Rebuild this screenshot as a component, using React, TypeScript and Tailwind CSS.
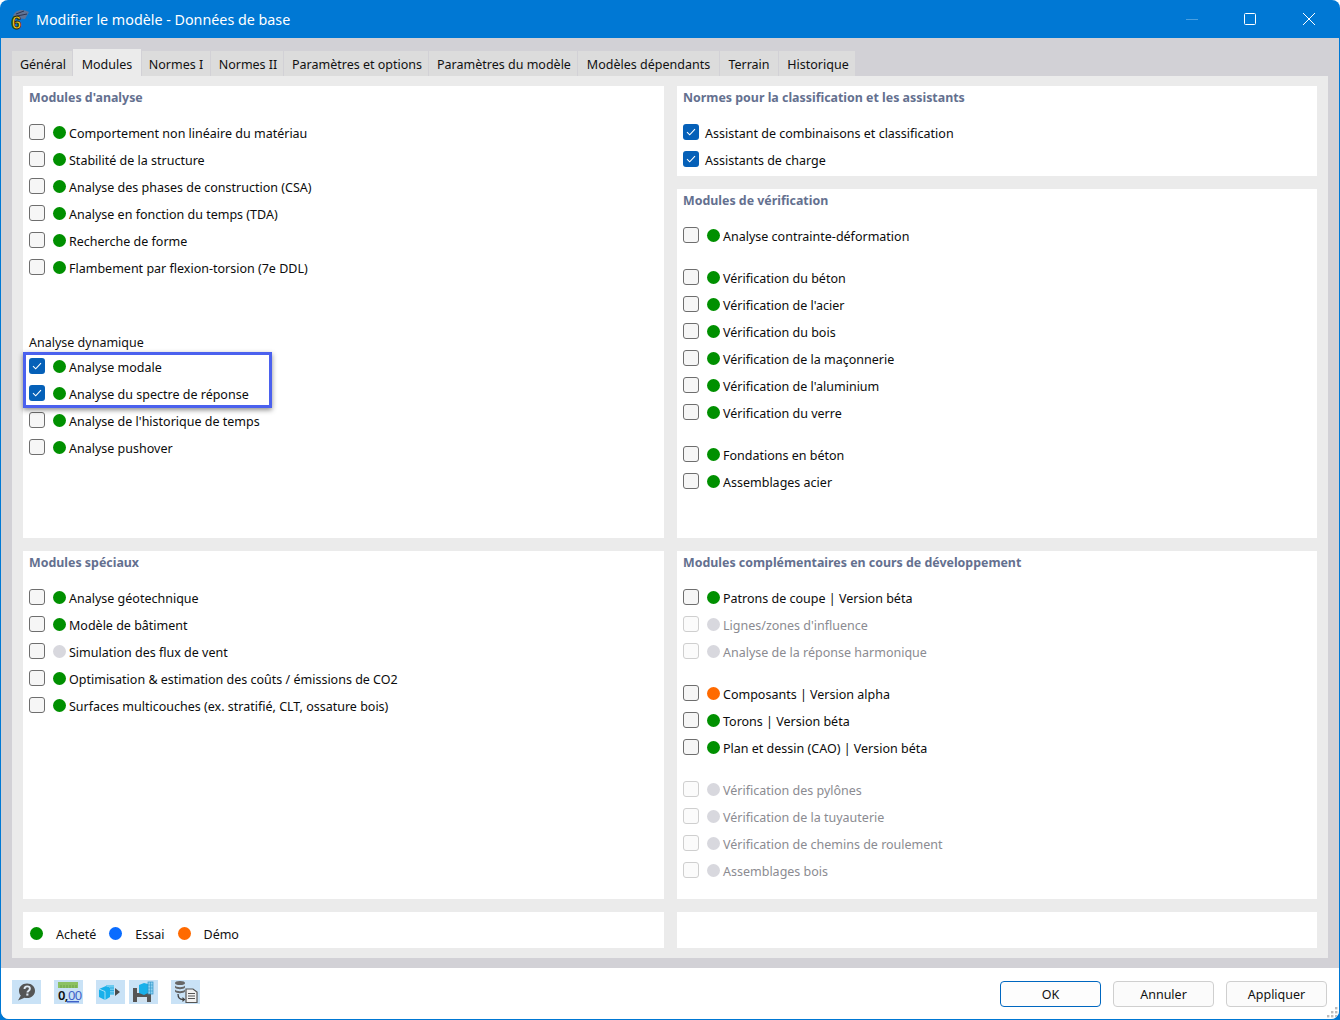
import React from "react";

type RowP = { t: string; c?: "g" | "o" | "n" | "d" | "x"; on?: boolean; mt?: boolean; dis?: boolean };

const Row = ({ t, c = "g", on, mt, dis }: RowP) => (
  <div className={`flex items-center h-[27px] pl-[6px] ${mt ? "mt-[15px]" : ""}`}>
    {on ? (
      <span className="w-4 h-4 rounded-[3px] bg-[#0560b8] flex items-center justify-center shrink-0 -mt-px">
        <svg width="10" height="8" viewBox="0 0 10 8" fill="none"><path d="M1 4.2 L3.7 6.8 L9 1.2" stroke="#fff" strokeWidth="1.1" /></svg>
      </span>
    ) : (
      <span className={`w-4 h-4 rounded-[3px] border shrink-0 -mt-px ${dis ? "border-[#cfcfcf] bg-[#fbfbfb]" : "border-[#6e6e6e] bg-[#f6f6f6]"}`} />
    )}
    {c !== "x" && (
      <span className={`w-[13px] h-[13px] rounded-full ml-2 shrink-0 -mt-px ${c === "g" ? "bg-[#009000]" : c === "o" ? "bg-[#ff6a00]" : "bg-[#d8d8de]"}`} />
    )}
    <span className={`pt-[4px] whitespace-nowrap ${c === "x" ? "ml-[6px]" : "ml-[3px]"} ${dis ? "text-[#8b8b91]" : "text-[#0c0c0c]"}`}>{t}</span>
  </div>
);

const Title = ({ t }: { t: string }) => (
  <div className="h-[22px] pl-[6px] pt-[2px] flex items-center font-bold text-[12.4px] text-[#64708f] mb-[11px]">{t}</div>
);

const tabs: [string, string][] = [
  ["Général", "w-[61px] pl-[2px]"],
  ["Modules", "w-[69px]"],
  ["Normes I", "w-[69px]"],
  ["Normes II", "w-[73px] pl-[2px]"],
  ["Paramètres et options", "w-[145px] pl-[2px]"],
  ["Paramètres du modèle", "w-[149px] pl-[2px]"],
  ["Modèles dépendants", "w-[142px]"],
  ["Terrain", "w-[59px]"],
  ["Historique", "w-[77px] pl-[2px]"],
];

const IconBox = ({ children, cls }: { children: React.ReactNode; cls?: string }) => (
  <div className={`w-[29px] h-[24px] bg-[#c9e2f6] flex items-center justify-center ${cls ?? ""}`}>{children}</div>
);

export default function App() {
  return (
    <div className="w-[1340px] h-[1020px] bg-[#0078d4] rounded-t-[8px] overflow-hidden text-[12.5px] leading-none flex flex-col relative" style={{ fontFamily: '"Noto Sans", sans-serif' }}>
      {/* Title bar */}
      <div className="h-[38px] flex items-center shrink-0 text-white relative">
        <svg className="ml-[9px] overflow-visible" width="20" height="22" viewBox="0 0 20 22">
          <path d="M4 8 C6 2 13 0 20 4 L16 11 L7 10 Z" fill="#5f7396" />
          <path d="M7 6 L15 3 M8 8 L18 6" stroke="#2c3550" strokeWidth="1" />
          <text x="2.5" y="21" fontSize="18" fontWeight="700" fill="#f4cc22" stroke="#2a2608" strokeWidth="0.9" fontFamily="Liberation Sans, sans-serif">6</text>
        </svg>
        <span className="ml-[7px] pt-[2px] text-[14.3px]">Modifier le modèle - Données de base</span>
        <div className="ml-auto flex items-center">
          <span className="w-3 h-px bg-[#4a9fe0] mr-[46px]" />
          <span className="w-3 h-3 border border-white rounded-[1.5px] mr-[47px]" />
          <svg className="mr-[25px]" width="12" height="12" viewBox="0 0 12 12"><path d="M0 0 L12 12 M12 0 L0 12" stroke="#fff" strokeWidth="1" /></svg>
        </div>
      </div>

      {/* Body */}
      <div className="flex-1 ml-px mr-px mb-px bg-[#d2d1d6] flex flex-col rounded-b-[8px] overflow-hidden">
        <div className="flex-1 flex flex-col px-[11px] pt-[13px] pb-[10px]">
          <div className="flex h-[25px] items-end shrink-0">
            {tabs.map(([t, w], i) => (
              <div key={t} className={`${w} flex items-center justify-center border-r border-[#d2d1d6] text-[#111] ${i === 1 ? "h-[27px] bg-[#ebebeb] pt-[5px]" : "h-[25px] bg-[#dcdcdc] pt-[3px]"}`}>{t}</div>
            ))}
          </div>
          <div className="flex-1 bg-[#ebebeb] px-[11px] py-[10px] flex flex-col gap-[13px]">
            <div className="flex gap-[13px] h-[452px]">
              <div className="w-[641px] bg-white relative">
                <Title t="Modules d'analyse" />
                <Row t="Comportement non linéaire du matériau" />
                <Row t="Stabilité de la structure" />
                <Row t="Analyse des phases de construction (CSA)" />
                <Row t="Analyse en fonction du temps (TDA)" />
                <Row t="Recherche de forme" />
                <Row t="Flambement par flexion-torsion (7e DDL)" />
                <div className="h-[25px] mt-[47px] pl-[6px] pt-[6px] flex items-center text-[#111]">Analyse dynamique</div>
                <Row t="Analyse modale" on />
                <Row t="Analyse du spectre de réponse" on />
                <Row t="Analyse de l'historique de temps" />
                <Row t="Analyse pushover" />
                <div className="absolute left-0 top-[266px] w-[249px] h-[56px] border-[3px] border-[#4b61ee] shadow-[0_2px_5px_rgba(0,0,0,0.45)]" />
              </div>
              <div className="w-[640px] flex flex-col gap-[13px]">
                <div className="h-[90px] bg-white">
                  <Title t="Normes pour la classification et les assistants" />
                  <Row t="Assistant de combinaisons et classification" on c="x" />
                  <Row t="Assistants de charge" on c="x" />
                </div>
                <div className="flex-1 bg-white">
                  <Title t="Modules de vérification" />
                  <Row t="Analyse contrainte-déformation" />
                  <Row t="Vérification du béton" mt />
                  <Row t="Vérification de l'acier" />
                  <Row t="Vérification du bois" />
                  <Row t="Vérification de la maçonnerie" />
                  <Row t="Vérification de l'aluminium" />
                  <Row t="Vérification du verre" />
                  <Row t="Fondations en béton" mt />
                  <Row t="Assemblages acier" />
                </div>
              </div>
            </div>
            <div className="flex gap-[13px] h-[348px]">
              <div className="w-[641px] bg-white">
                <Title t="Modules spéciaux" />
                <Row t="Analyse géotechnique" />
                <Row t="Modèle de bâtiment" />
                <Row t="Simulation des flux de vent" c="n" />
                <Row t="Optimisation & estimation des coûts / émissions de CO2" />
                <Row t="Surfaces multicouches (ex. stratifié, CLT, ossature bois)" />
              </div>
              <div className="w-[640px] bg-white">
                <Title t="Modules complémentaires en cours de développement" />
                <Row t="Patrons de coupe | Version béta" />
                <Row t="Lignes/zones d'influence" c="d" dis />
                <Row t="Analyse de la réponse harmonique" c="d" dis />
                <Row t="Composants | Version alpha" c="o" mt />
                <Row t="Torons | Version béta" />
                <Row t="Plan et dessin (CAO) | Version béta" />
                <Row t="Vérification des pylônes" c="d" dis mt />
                <Row t="Vérification de la tuyauterie" c="d" dis />
                <Row t="Vérification de chemins de roulement" c="d" dis />
                <Row t="Assemblages bois" c="d" dis />
              </div>
            </div>
            <div className="flex gap-[13px] h-[36px]">
              <div className="w-[641px] bg-white flex items-center pl-[7px] text-[#111]">
                <span className="w-[13px] h-[13px] rounded-full bg-[#009000] mt-[6px]" />
                <span className="ml-[13px] mt-[11px]">Acheté</span>
                <span className="w-[13px] h-[13px] rounded-full bg-[#0a6cff] ml-[13px] mt-[6px]" />
                <span className="ml-[13px] mt-[11px]">Essai</span>
                <span className="w-[13px] h-[13px] rounded-full bg-[#ff6a00] ml-[13px] mt-[6px]" />
                <span className="ml-[13px] mt-[11px]">Démo</span>
              </div>
              <div className="w-[640px] bg-white" />
            </div>
          </div>
        </div>

        {/* Footer */}
        <div className="h-[51px] bg-white flex items-start pt-[12px] pl-[11px] pr-[12px] shrink-0 relative">
          <IconBox>
            <svg width="19" height="18" viewBox="0 0 19 18">
              <path d="M10 0.5 C5 0.5 2 3.8 2 7.7 C2 9.8 2.8 11.4 3.8 12.5 L1 17.5 L7.5 14.7 C8.3 14.9 9.1 15 10 15 C15 15 18 11.6 18 7.7 C18 3.8 15 0.5 10 0.5 Z" fill="#555" />
              <path d="M7.5 6 C7.5 4.4 8.6 3.4 10.2 3.4 C11.8 3.4 12.9 4.4 12.9 5.7 C12.9 7.6 10.4 7.7 10.4 9.6" fill="none" stroke="#dfe9f2" strokeWidth="1.9" />
              <rect x="9.3" y="10.5" width="2.1" height="2.1" fill="#dfe9f2" />
            </svg>
          </IconBox>
          <IconBox cls="ml-[13px] relative">
            <svg width="29" height="24" viewBox="0 0 29 24">
              <rect x="4" y="2" width="20" height="6" fill="#8cc163" />
              <path d="M7 5v3M10 5v3M13 5v3M16 5v3M19 5v3M22 5v3" stroke="#5f9a3d" strokeWidth="0.7" />
              <rect x="13" y="21" width="12" height="1.5" fill="#3f62c9" />
            </svg>
            <span className="absolute left-[4px] top-[9px] text-[13px] font-semibold tracking-[-0.6px] text-[#111]">0,<span className="text-[#3f62c9] font-normal">00</span></span>
          </IconBox>
          <IconBox cls="ml-[13px]">
            <svg width="29" height="24" viewBox="0 0 29 24">
              <path d="M3 9 L10 6 L14 7.5 L14 17 L9 20 L3 17 Z" fill="#19b0ea" />
              <path d="M10 5 L18 5 L18 15 L14 15 L14 7.5 L10 6 Z" fill="#6ccbf0" />
              <path d="M14 8H18M14 10.5H18M14 13H18" stroke="#19a0dc" strokeWidth="0.7" />
              <path d="M3 9 L9 11.5 L9 20" fill="none" stroke="#c8eefb" strokeWidth="0.8" />
              <path d="M19 8 L24 12 L19 16 Z" fill="#4b4b4b" />
            </svg>
          </IconBox>
          <IconBox cls="ml-[4px]">
            <svg width="29" height="24" viewBox="0 0 29 24">
              <path d="M4 8 H18 L22 11 V22 H4 Z" fill="#555" />
              <rect x="8" y="8" width="8" height="5" fill="#cfe0ee" />
              <rect x="8" y="17" width="10" height="5" fill="#cfe0ee" />
              <path d="M10 5 L15 3 L19 4 L19 13 L15 15 L10 13 Z" fill="#19b0ea" />
              <rect x="19" y="2" width="5" height="12" fill="#8fd3f1" stroke="#2f93c9" strokeWidth="0.7" />
              <path d="M19 5H24M19 8H24M19 11H24M21.5 2V14" stroke="#2f93c9" strokeWidth="0.6" />
            </svg>
          </IconBox>
          <IconBox cls="ml-[13px]">
            <svg width="29" height="24" viewBox="0 0 29 24">
              <ellipse cx="9" cy="3" rx="5" ry="2" fill="#666" />
              <path d="M4 5.5 C5 7.7 13 7.7 14 5.5 V7.5 C13 9.7 5 9.7 4 7.5 Z" fill="#666" />
              <path d="M4 9.5 C5 11.7 13 11.7 14 9.5 V11.5 C13 13.7 5 13.7 4 11.5 Z" fill="#666" />
              <path d="M7 14 C7 17.5 9 19.5 12 19.5" fill="none" stroke="#444" strokeWidth="1.3" />
              <path d="M11.5 17 L14.5 19.5 L11.5 22 Z" fill="#444" />
              <path d="M15 9 H22 L26 12 V22.5 H15 Z" fill="#f2f2f2" stroke="#555" strokeWidth="1.2" />
              <path d="M17 13.5H24M17 16H24M17 18.5H24" stroke="#555" strokeWidth="1" />
            </svg>
          </IconBox>
          <div className="ml-auto flex gap-3 items-start pt-px text-[#111]">
            <div className="w-[101px] h-[26px] rounded-[4px] border border-[#0067c0] bg-[#fdfdfd] flex items-center justify-center pt-[3px]">OK</div>
            <div className="w-[101px] h-[26px] rounded-[4px] border border-[#cfcfcf] bg-[#fbfbfb] flex items-center justify-center pt-[3px]">Annuler</div>
            <div className="w-[101px] h-[26px] rounded-[4px] border border-[#cfcfcf] bg-[#fbfbfb] flex items-center justify-center pt-[3px]">Appliquer</div>
          </div>
          <svg className="absolute right-[1px] bottom-[1px]" width="11" height="11" viewBox="0 0 11 11" fill="#bdbdbd">
            <rect x="8" y="0" width="2.4" height="2.4" /><rect x="4" y="4" width="2.4" height="2.4" /><rect x="8" y="4" width="2.4" height="2.4" />
            <rect x="0" y="8" width="2.4" height="2.4" /><rect x="4" y="8" width="2.4" height="2.4" /><rect x="8" y="8" width="2.4" height="2.4" />
          </svg>
        </div>
      </div>
    </div>
  );
}
